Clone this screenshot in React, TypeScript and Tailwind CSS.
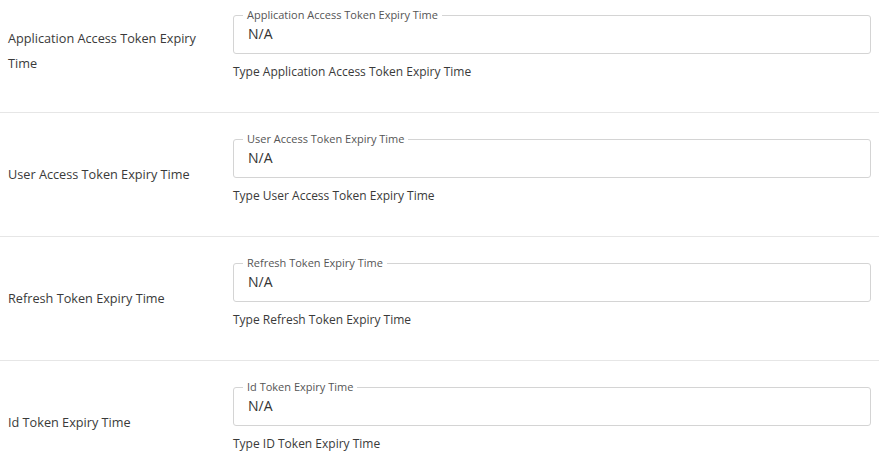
const rows = [
  { label: "Application Access Token Expiry Time", legend: "Application Access Token Expiry Time", help: "Type Application Access Token Expiry Time" },
  { label: "User Access Token Expiry Time", legend: "User Access Token Expiry Time", help: "Type User Access Token Expiry Time" },
  { label: "Refresh Token Expiry Time", legend: "Refresh Token Expiry Time", help: "Type Refresh Token Expiry Time" },
  { label: "Id Token Expiry Time", legend: "Id Token Expiry Time", help: "Type ID Token Expiry Time" },
];

const FieldRow = ({ label, legend, help, first }: { label: string; legend: string; help: string; first?: boolean }) => {
  return (
    <div className={`flex items-center border-b border-[#e6e6e6] ${first ? "-mt-[11px]" : ""}`}>
      <div className="w-[233px] shrink-0 pl-2 pr-6 text-[12.7px] leading-[25px] text-[#3a3a3a]">{label}</div>
      <div className="flex-1 pr-2 pt-[19px] pb-[32px]">
        <fieldset className="rounded-[3px] border border-[#d4d4d4] px-[9px]">
          <legend className="px-[4px] text-[11px] leading-[14px] text-[#555]">{legend}</legend>
          <div className="h-[31px] pt-[2px] pl-[5px] text-[14px] leading-[20px] text-[#333]">N/A</div>
        </fieldset>
        <div className="mt-[10px] text-[12px] leading-[16px] text-[#3a3a3a]">{help}</div>
      </div>
    </div>
  );
};

export default function App() {
  return (
    <div className="h-[460px] w-[879px] overflow-hidden bg-white font-['Open_Sans',sans-serif]">
      {rows.map((r, i) => (
        <FieldRow key={r.label} {...r} first={i === 0} />
      ))}
    </div>
  );
}
